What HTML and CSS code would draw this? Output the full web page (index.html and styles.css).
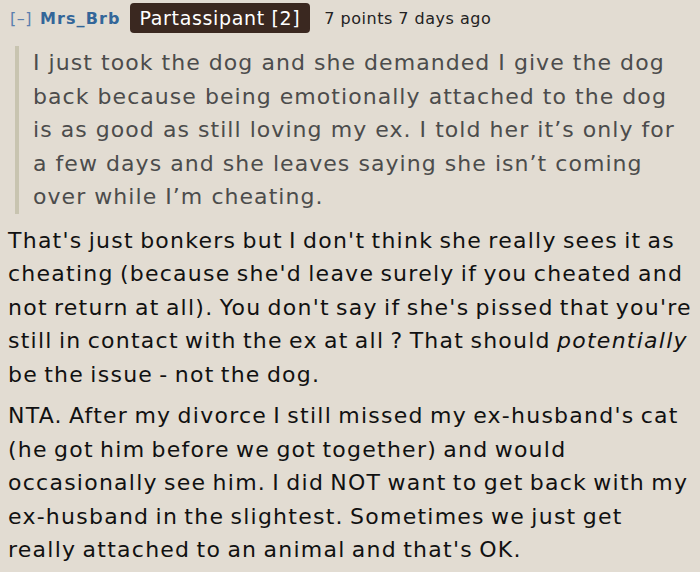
FILE: index.html
```html
<!DOCTYPE html>
<html>
<head>
<meta charset="utf-8">
<link rel="stylesheet" href="styles.css">
</head>
<body>
<div class="comment">
  <div class="tagline">
    <span class="toggle">[–]</span>
    <span class="author">Mrs_Brb</span>
    <span class="flair">Partassipant [2]</span>
    <span class="meta">7 points 7 days ago</span>
  </div>
  <blockquote class="quote">I just took the dog and she demanded I give the dog back because being emotionally attached to the dog is as good as still loving my ex. I told her it’s only for a few days and she leaves saying she isn’t coming over while I’m cheating.</blockquote>
  <p class="para">That's just bonkers but I don't think she really sees it as cheating (because she'd leave surely if you cheated and not return at all). You don't say if she's pissed that you're still in contact with the ex at all ? That should <em>potentially</em> be the issue - not the dog.</p>
  <p class="para">NTA. After my divorce I still missed my ex-husband's cat (he got him before we got together) and would occasionally see him. I did NOT want to get back with my ex-husband in the slightest. Sometimes we just get really attached to an animal and that's OK.</p>
</div>
</body>
</html>
```

FILE: styles.css
```css
html, body {
  margin: 0;
  padding: 0;
  background: #e2dcd2;
}
body {
  font-family: "DejaVu Sans", Verdana, sans-serif;
  color: #111;
}
.comment {
  padding: 3px 0 0 8px;
}
.tagline {
  display: flex;
  align-items: center;
  height: 30px;
  font-size: 16px;
  letter-spacing: 0.5px;
  white-space: nowrap;
}
.toggle {
  color: #5a7fae;
  margin-left: 2px;
  margin-right: 8px;
}
.author {
  color: #336699;
  font-weight: bold;
  letter-spacing: 1.1px;
  margin-right: 9px;
}
.flair {
  background: #3a2820;
  color: #fff;
  font-size: 19px;
  letter-spacing: 0.65px;
  border-radius: 4px;
  height: 30px;
  line-height: 30px;
  padding: 0 10px;
  margin-right: 14px;
}
.meta {
  color: #222;
}
.quote {
  margin: 13px 8px 0 7px;
  border-left: 4px solid #c8c4b0;
  padding-left: 14px;
  color: #4c4c4c;
  font-size: 22px;
  letter-spacing: 1.05px;
  line-height: 33.5px;
}
.para {
  margin: 10px 5px 0 0;
  font-size: 22px;
  letter-spacing: 1.25px;
  word-spacing: -2px;
  line-height: 33.5px;
}
.para + .para {
  margin-top: 8px;
}
```
